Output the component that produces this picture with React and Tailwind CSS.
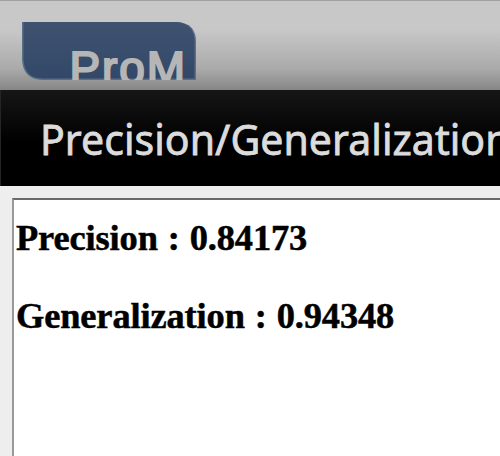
function Logo() {
  return (
    <svg className="block h-[58px] w-[174px]" viewBox="0 0 174 58" role="img" aria-label="ProM">
      <defs>
        <linearGradient id="logo-blue" x1="0" y1="0" x2="0" y2="1">
          <stop offset="0" stopColor="#3f5270" />
          <stop offset="1" stopColor="#334868" />
        </linearGradient>
      </defs>
      <path d="M0 0H155Q174 1 174 20V58H20Q1 57 0 38Z" fill="#5a6d89" />
      <path d="M1.5 0H154Q172.5 1 172.5 20V56.5H20Q2.5 56 1.5 38Z" fill="url(#logo-blue)" />
      <text x="47.5" y="61.5" fontFamily="'Liberation Sans', sans-serif" fontSize="46" letterSpacing="1.9" fill="#b6b6b6" stroke="#b6b6b6" strokeWidth="2.1">
        ProM
      </text>
    </svg>
  );
}

export default function App() {
  return (
    <div className="flex h-[456px] w-[500px] flex-col overflow-hidden bg-[#eeeeee]">
      <header className="h-[90px] shrink-0 border-t border-[#a0a0a0] bg-[linear-gradient(180deg,#c8c8c8_0%,#c8c8c8_32%,#aaaaaa_76%,#868686_100%)] pt-[21px] pl-[22px]">
        <Logo />
      </header>
      <div className="h-24 shrink-0 border-l border-[#252525] bg-[linear-gradient(180deg,#161616_0%,#000000_55%)] pt-[24px] pl-[39px]">
        <h1 className="font-['Noto_Sans','Open_Sans',sans-serif] text-[41px] leading-[50px] tracking-[0.05px] whitespace-nowrap text-[#dcdcdc] [-webkit-text-stroke:0.8px_#dcdcdc]">
          Precision/Generalization
        </h1>
      </div>
      <main className="mt-3 ml-3 grow border-t-2 border-l-2 border-t-[#6a6a6a] border-l-[#999999] bg-white pt-[17px] pl-[2px] font-['Liberation_Serif',serif] text-[36.4px] leading-[42px] font-bold tracking-[-0.12px] whitespace-nowrap text-black [-webkit-text-stroke:0.5px_black] [word-spacing:1px]">
        <p>Precision : 0.84173</p>
        <p className="mt-9">Generalization : 0.94348</p>
      </main>
    </div>
  );
}
